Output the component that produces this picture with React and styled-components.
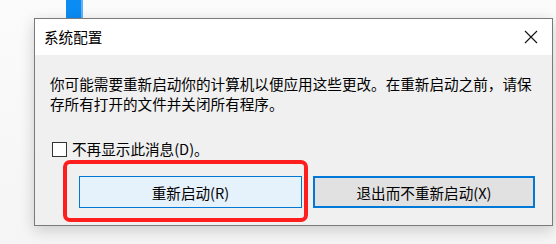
import React from "react";
import styled, { createGlobalStyle } from "styled-components";

const GlobalStyle = createGlobalStyle`
  html, body {
    margin: 0;
    padding: 0;
    background: #f7f7f7;
  }
  body {
    font-family: "Noto Sans CJK SC", "Noto Sans", sans-serif;
    width: 556px;
    height: 244px;
    overflow: hidden;
  }
`;

const App = () => {
  return (
    <Page>
      <GlobalStyle />
      <BackWindow>
        <BlueBar />
      </BackWindow>
      <Dialog>
        <TitleBar>
          <Title>系统配置</Title>
          <CloseButton aria-label="关闭">
            <svg width="14" height="14" viewBox="0 0 14 14">
              <path d="M1 1 L13 13 M13 1 L1 13" stroke="#111" strokeWidth="1.1" fill="none" />
            </svg>
          </CloseButton>
        </TitleBar>
        <Body>
          <Message>
            你可能需要重新启动你的计算机以便应用这些更改。在重新启动之前，请保存所有打开的文件并关闭所有程序。
          </Message>
          <CheckRow>
            <CheckBox />
            <CheckLabel>不再显示此消息(D)。</CheckLabel>
          </CheckRow>
          <ButtonRow>
            <DialogButton $hover>重新启动(R)</DialogButton>
            <DialogButton $focused>退出而不重新启动(X)</DialogButton>
          </ButtonRow>
        </Body>
        <Highlight />
      </Dialog>
    </Page>
  );
};

const Page = styled.div`
  width: 556px;
  height: 244px;
  background: linear-gradient(#fbfbfb, #f5f5f5);
`;

const BackWindow = styled.div`
  height: 18px;
  padding-left: 66px;
  display: flex;
`;

const BlueBar = styled.div`
  width: 15px;
  height: 18px;
  background: #0b8bf4;
  border-right: 2px solid #5fb0f5;
`;

const Dialog = styled.div`
  position: relative;
  margin-left: 34px;
  width: 517px;
  height: 206px;
  border: 1px solid #7a7a7a;
  background: #f0f0f0;
  box-shadow: 0 4px 14px rgba(0, 0, 0, 0.18);
  display: flex;
  flex-direction: column;
`;

const TitleBar = styled.div`
  height: 36px;
  background: #ffffff;
  display: flex;
  align-items: center;
  justify-content: space-between;
  padding: 0 14px 0 9px;
`;

const Title = styled.div`
  font-size: 14.6px;
  color: #000;
  line-height: 1;
`;

const CloseButton = styled.div`
  width: 14px;
  height: 14px;
  display: flex;
`;

const Body = styled.div`
  flex: 1;
  padding: 19px 17px 0 15px;
  display: flex;
  flex-direction: column;
`;

const Message = styled.p`
  margin: 0;
  font-size: 14.6px;
  line-height: 19.5px;
  color: #000;
  word-break: break-all;
`;

const CheckRow = styled.div`
  margin-top: 28px;
  display: flex;
  align-items: center;
  height: 16px;
  padding-left: 2px;
`;

const CheckBox = styled.div`
  width: 13px;
  height: 13px;
  border: 1px solid #333;
  background: #fff;
`;

const CheckLabel = styled.span`
  margin-left: 5px;
  font-size: 14.6px;
  line-height: 16px;
  color: #000;
`;

const ButtonRow = styled.div`
  margin-top: 19px;
  display: flex;
  justify-content: flex-end;
  gap: 11px;
`;

const DialogButton = styled.div`
  box-sizing: border-box;
  width: ${(p) => (p.$focused ? "222px" : "223px")};
  height: 32px;
  display: flex;
  align-items: center;
  justify-content: center;
  font-size: 14.6px;
  color: #000;
  background: ${(p) => (p.$hover ? "#e5f1fb" : "#e1e1e1")};
  border: ${(p) => (p.$focused ? "2px" : "1px")} solid #0078d7;
`;

const Highlight = styled.div`
  position: absolute;
  left: 28px;
  top: 141px;
  width: 245px;
  height: 62px;
  box-sizing: border-box;
  border: 4px solid #ff1e1e;
  border-radius: 7px;
  pointer-events: none;
`;

export default App;
